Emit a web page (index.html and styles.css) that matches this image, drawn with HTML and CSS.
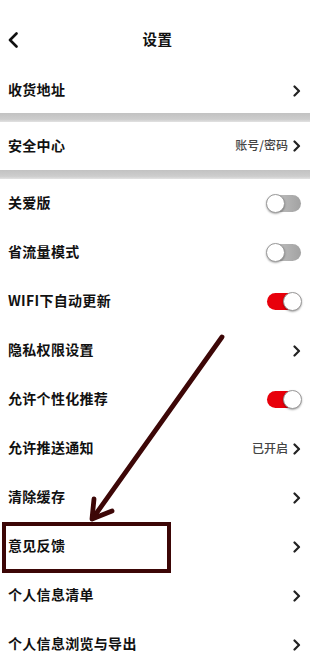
FILE: index.html
```html
<!DOCTYPE html>
<html lang="zh-CN">
<head>
<meta charset="utf-8">
<title>设置</title>
<link rel="stylesheet" href="styles.css">
</head>
<body>
<div class="page">
  <div class="status"></div>
  <header class="nav">
    <svg class="back" viewBox="0 0 10 16" width="10" height="16"><polyline points="8.5,1.5 2,8 8.5,14.5" fill="none" stroke="#111" stroke-width="2.6" stroke-linecap="round" stroke-linejoin="round"/></svg>
    <h1 class="title">设置</h1>
  </header>

  <div class="row first"><span class="label">收货地址</span><span class="right"><svg class="chev" viewBox="0 0 8 12" width="8" height="12"><polyline points="1.5,1.5 6,6 1.5,10.5" fill="none" stroke="#222" stroke-width="2.2" stroke-linecap="round" stroke-linejoin="round"/></svg></span></div>
  <div class="band"></div>
  <div class="row sec"><span class="label">安全中心</span><span class="right"><span class="hint">账号/密码</span><svg class="chev" viewBox="0 0 8 12" width="8" height="12"><polyline points="1.5,1.5 6,6 1.5,10.5" fill="none" stroke="#222" stroke-width="2.2" stroke-linecap="round" stroke-linejoin="round"/></svg></span></div>
  <div class="band"></div>

  <div class="list">
    <div class="row"><span class="label">关爱版</span><span class="toggle off"><span class="knob"></span></span></div>
    <div class="row"><span class="label">省流量模式</span><span class="toggle off"><span class="knob"></span></span></div>
    <div class="row"><span class="label">WIFI下自动更新</span><span class="toggle on"><span class="knob"></span></span></div>
    <div class="row"><span class="label">隐私权限设置</span><span class="right"><svg class="chev" viewBox="0 0 8 12" width="8" height="12"><polyline points="1.5,1.5 6,6 1.5,10.5" fill="none" stroke="#222" stroke-width="2.2" stroke-linecap="round" stroke-linejoin="round"/></svg></span></div>
    <div class="row"><span class="label">允许个性化推荐</span><span class="toggle on"><span class="knob"></span></span></div>
    <div class="row"><span class="label">允许推送通知</span><span class="right"><span class="hint">已开启</span><svg class="chev" viewBox="0 0 8 12" width="8" height="12"><polyline points="1.5,1.5 6,6 1.5,10.5" fill="none" stroke="#222" stroke-width="2.2" stroke-linecap="round" stroke-linejoin="round"/></svg></span></div>
    <div class="row"><span class="label">清除缓存</span><span class="right"><svg class="chev" viewBox="0 0 8 12" width="8" height="12"><polyline points="1.5,1.5 6,6 1.5,10.5" fill="none" stroke="#222" stroke-width="2.2" stroke-linecap="round" stroke-linejoin="round"/></svg></span></div>
    <div class="row marked"><span class="label">意见反馈</span><span class="right"><svg class="chev" viewBox="0 0 8 12" width="8" height="12"><polyline points="1.5,1.5 6,6 1.5,10.5" fill="none" stroke="#222" stroke-width="2.2" stroke-linecap="round" stroke-linejoin="round"/></svg></span><span class="mark-box"></span></div>
    <div class="row"><span class="label">个人信息清单</span><span class="right"><svg class="chev" viewBox="0 0 8 12" width="8" height="12"><polyline points="1.5,1.5 6,6 1.5,10.5" fill="none" stroke="#222" stroke-width="2.2" stroke-linecap="round" stroke-linejoin="round"/></svg></span></div>
    <div class="row"><span class="label">个人信息浏览与导出</span><span class="right"><svg class="chev" viewBox="0 0 8 12" width="8" height="12"><polyline points="1.5,1.5 6,6 1.5,10.5" fill="none" stroke="#222" stroke-width="2.2" stroke-linecap="round" stroke-linejoin="round"/></svg></span></div>
  </div>

  <svg class="arrow" viewBox="0 0 310 653" width="310" height="653">
    <g fill="none" stroke="#3d0707" stroke-width="4.8" stroke-linecap="round" stroke-linejoin="round">
      <line x1="222" y1="337" x2="93" y2="518"/>
      <polyline points="94,499 92,519 112,511"/>
    </g>
  </svg>
</div>
</body>
</html>
```
FILE: styles.css
```css
* { box-sizing: border-box; }
html, body { margin: 0; padding: 0; background: #fff; }
body {
  font-family: "Noto Sans CJK SC", "Noto Sans", "Liberation Sans", sans-serif;
  color: #111;
}
.page {
  position: relative;
  width: 310px;
  height: 653px;
  overflow: hidden;
  background: #fff;
}
.status { height: 20px; }
.nav {
  height: 40px;
  padding-bottom: 4px;
  display: flex;
  align-items: center;
  justify-content: center;
  position: relative;
}
.back {
  position: absolute;
  left: 8px;
  top: 12px;
}
.title {
  margin: 0 0 0 5px;
  font-size: 14.5px;
  font-weight: 700;
  letter-spacing: 0.5px;
}
.row {
  height: 49px;
  display: flex;
  align-items: center;
  justify-content: space-between;
  padding: 0 8px 3px 8px;
  position: relative;
}
.row.first { height: 45px; margin-top: 8px; }
.row.sec { height: 48px; }
.label {
  font-size: 14px;
  font-weight: 700;
  letter-spacing: 0.3px;
}
.right {
  display: flex;
  align-items: center;
  gap: 5px;
}
.right .chev { position: relative; top: 1.5px; }
.hint {
  font-size: 12px;
  color: #444;
  font-weight: 500;
}
.chev { display: block; margin-right: 1px; }
.band {
  height: 9px;
  background: linear-gradient(#c2c2c2, #cdcdcd 70%, #e2e2e2);
}
.toggle {
  width: 34px;
  height: 17px;
  border-radius: 9px;
  position: relative;
  margin-right: 1px;
  top: 1.5px;
}
.toggle.off { background: linear-gradient(90deg, #c9c9c9, #a2a2a2); }
.toggle.on { background: #e8000b; }
.knob {
  position: absolute;
  top: -1px;
  width: 19px;
  height: 19px;
  border-radius: 50%;
  background: #fff;
  border: 1px solid #9a9a9a;
  box-shadow: 0 1px 2px rgba(0,0,0,0.35);
}
.toggle.off .knob { left: -1px; }
.toggle.on .knob { right: -1px; }
.mark-box {
  position: absolute;
  left: 2px;
  top: 0;
  width: 169px;
  height: 51px;
  border: 4px solid #3c0606;
}
.arrow {
  position: absolute;
  left: 0;
  top: 0;
  pointer-events: none;
}
```
